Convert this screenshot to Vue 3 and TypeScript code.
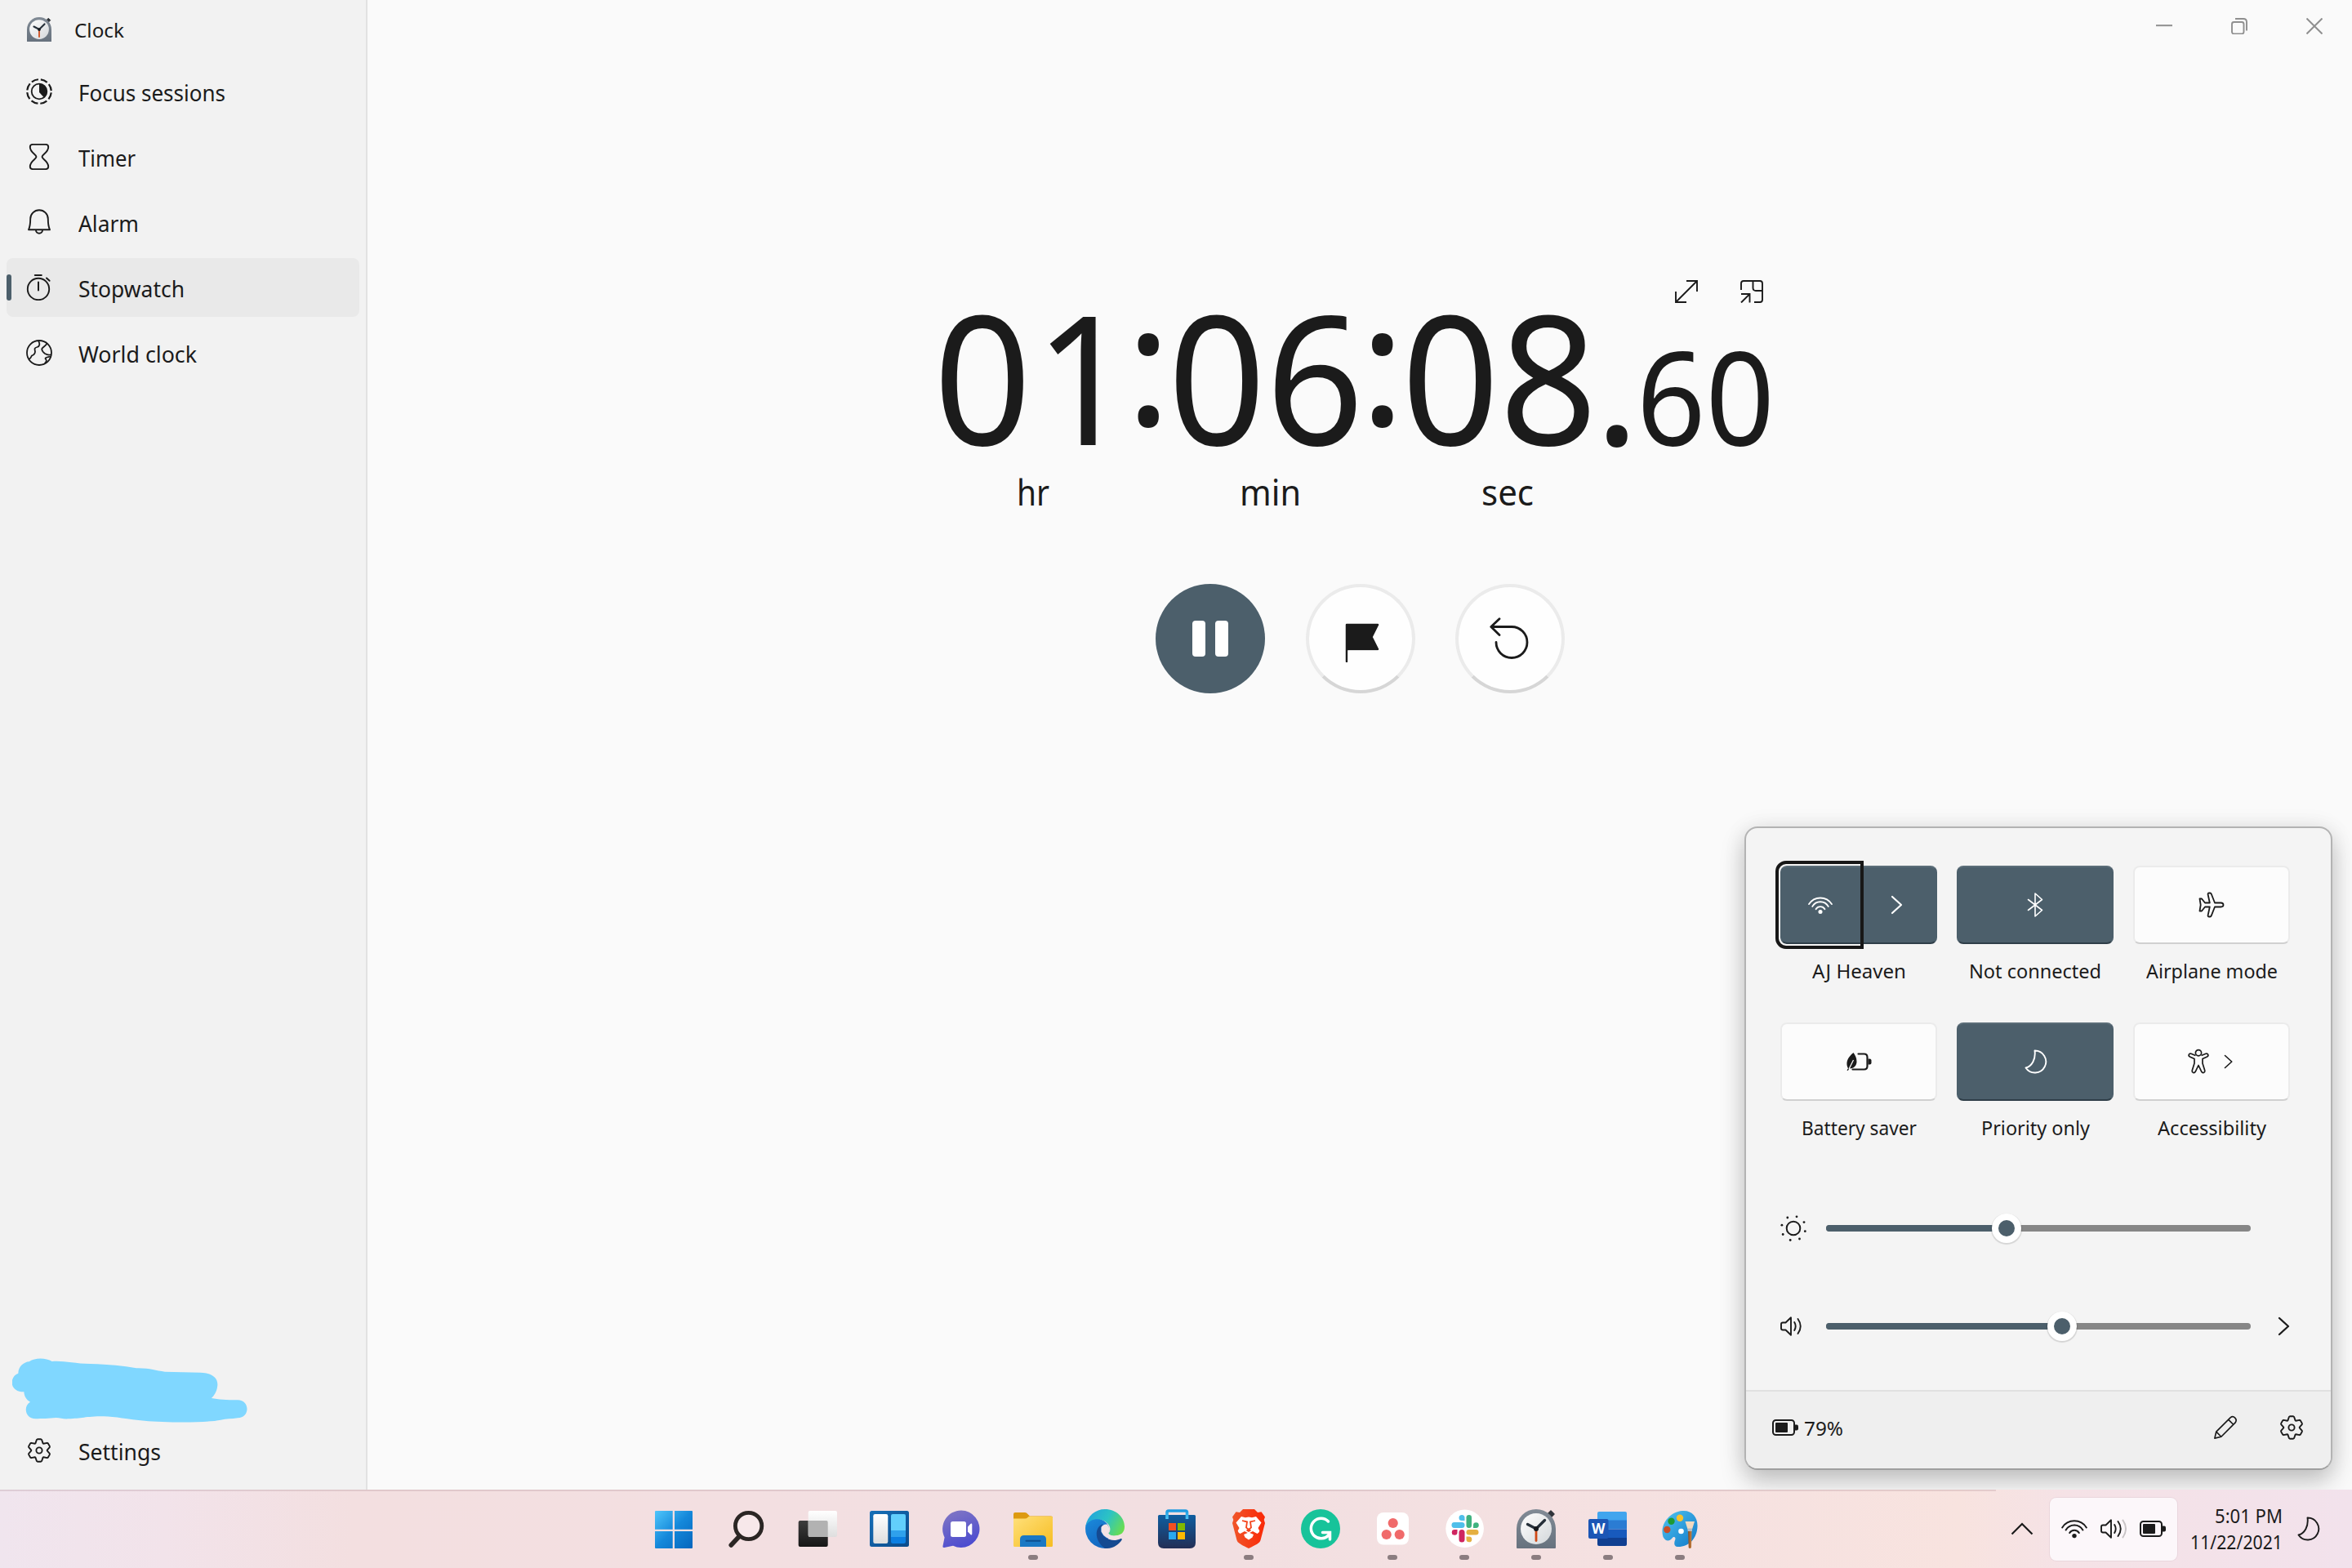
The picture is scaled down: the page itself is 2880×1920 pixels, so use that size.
<script setup lang="ts">
import type { ObjectDirective } from 'vue'

// Condenses a run of text horizontally so that it takes exactly the given width.
const vFit: ObjectDirective<HTMLElement, number> = {
  mounted(el, { value }) {
    const natural = el.getBoundingClientRect().width
    el.style.transform = `scaleX(${value / natural})`
    el.style.marginRight = `${value - natural}px`
  },
}

interface NavItem {
  label: string
  icon: string
  width: number
  active?: boolean
}

const nav: NavItem[] = [
  { label: 'Focus sessions', icon: 'focus', width: 180 },
  { label: 'Timer', icon: 'timer', width: 70 },
  { label: 'Alarm', icon: 'bell', width: 74 },
  { label: 'Stopwatch', icon: 'stopwatch', width: 130, active: true },
  { label: 'World clock', icon: 'globe', width: 145 },
]

interface Tile {
  label: string
  icon: string
  width: number
  on: boolean
  split?: boolean
  more?: boolean
}

const tiles: Tile[] = [
  { label: 'AJ Heaven', icon: 'wifi', width: 115, on: true, split: true },
  { label: 'Not connected', icon: 'bluetooth', width: 162, on: true },
  { label: 'Airplane mode', icon: 'plane', width: 161, on: false },
  { label: 'Battery saver', icon: 'saver', width: 141, on: false },
  { label: 'Priority only', icon: 'moon', width: 133, on: true },
  { label: 'Accessibility', icon: 'person', width: 133, on: false, more: true },
]

const sliders = [
  { name: 'sun', value: 42.5, more: false },
  { name: 'speaker', value: 55.6, more: true },
]

const apps = [
  { icon: 'windows', running: false },
  { icon: 'search', running: false },
  { icon: 'taskview', running: false },
  { icon: 'widgets', running: false },
  { icon: 'chat', running: false },
  { icon: 'folder', running: true },
  { icon: 'edge', running: false },
  { icon: 'store', running: false },
  { icon: 'brave', running: true },
  { icon: 'grammarly', running: false },
  { icon: 'asana', running: true },
  { icon: 'slack', running: true },
  { icon: 'clockapp', running: true },
  { icon: 'word', running: true },
  { icon: 'paint', running: true },
]

// Six-toothed gear around (16, 16).
const gear = (() => {
  const profile = [[-4.6, -8.6], [-3.1, -13], [-2, -13.7], [2, -13.7], [3.1, -13], [4.6, -8.6]]
  const points: string[] = []
  for (let k = 0; k < 6; k++) {
    const a = (k * Math.PI) / 3
    for (const [x, y] of profile) {
      const px = 16 + x * Math.cos(a) - y * Math.sin(a)
      const py = 16 + x * Math.sin(a) + y * Math.cos(a)
      points.push(`${px.toFixed(2)} ${py.toFixed(2)}`)
    }
  }
  return `M${points.join('L')}Z`
})()
</script>

<template>
  <svg class="defs" width="0" height="0" aria-hidden="true">
    <defs>
      <linearGradient id="gWin" x1="0" y1="0" x2="1" y2="1"><stop offset="0" stop-color="#4fc6fb" /><stop offset=".5" stop-color="#1488da" /><stop offset="1" stop-color="#0566bd" /></linearGradient>
      <linearGradient id="gDark" x1="0" y1="0" x2="0" y2="1"><stop offset="0" stop-color="#3d3d3d" /><stop offset="1" stop-color="#161616" /></linearGradient>
      <linearGradient id="gLight" x1="0" y1="0" x2="0" y2="1"><stop offset="0" stop-color="#fff" /><stop offset="1" stop-color="#dedede" /></linearGradient>
      <linearGradient id="gWid" x1="0" y1="0" x2="1" y2="1"><stop offset="0" stop-color="#1670b8" /><stop offset="1" stop-color="#0b4a8a" /></linearGradient>
      <linearGradient id="gChat" x1=".2" y1="0" x2=".6" y2="1"><stop offset="0" stop-color="#8076c4" /><stop offset="1" stop-color="#4b4bd0" /></linearGradient>
      <linearGradient id="gFold" x1="0" y1="0" x2="1" y2="1"><stop offset="0" stop-color="#ffe07a" /><stop offset="1" stop-color="#f6bd22" /></linearGradient>
      <linearGradient id="gEdgeT" x1="0" y1=".3" x2="1" y2=".7"><stop offset="0" stop-color="#22a4dc" /><stop offset=".5" stop-color="#2cc3c4" /><stop offset="1" stop-color="#6ade4e" /></linearGradient>
      <linearGradient id="gEdgeB" x1="0" y1="0" x2=".5" y2="1"><stop offset="0" stop-color="#1b8bdc" /><stop offset="1" stop-color="#1367c0" /></linearGradient>
      <linearGradient id="gStore" x1="0" y1="0" x2="0" y2="1"><stop offset="0" stop-color="#0f5ea0" /><stop offset="1" stop-color="#232e55" /></linearGradient>
      <linearGradient id="gHandle" x1="0" y1="0" x2="0" y2="1"><stop offset="0" stop-color="#1e9ae0" /><stop offset="1" stop-color="#4cc8f8" /></linearGradient>
      <linearGradient id="gBrave" x1="0" y1="0" x2="1" y2="0"><stop offset="0" stop-color="#f0562a" /><stop offset="1" stop-color="#fa2806" /></linearGradient>
      <linearGradient id="gCase" x1="0" y1="0" x2="0" y2="1"><stop offset="0" stop-color="#818b96" /><stop offset="1" stop-color="#67727e" /></linearGradient>
      <linearGradient id="gFace" x1="0" y1="0" x2="1" y2="1"><stop offset="0" stop-color="#fff" /><stop offset="1" stop-color="#d3d7da" /></linearGradient>
      <linearGradient id="gPal" x1="0" y1="0" x2="1" y2="1"><stop offset="0" stop-color="#4fc3f0" /><stop offset="1" stop-color="#1179c9" /></linearGradient>
      <linearGradient id="gBrush" x1="0" y1="0" x2="1" y2="0"><stop offset="0" stop-color="#8a4c1e" /><stop offset="1" stop-color="#c98240" /></linearGradient>
    </defs>

    <symbol id="i-focus" viewBox="0 0 32 32">
      <circle cx="16" cy="16" r="14.8" fill="none" stroke="currentColor" stroke-width="2.2" stroke-dasharray="8.6 3.02" stroke-dashoffset="-1.5" stroke-linecap="butt" />
      <circle cx="16" cy="16" r="9.3" fill="none" stroke="currentColor" stroke-width="1.8" />
      <path d="M16 6.5A9.5 9.5 0 0 1 22 23.4L16 17Z" fill="currentColor" />
    </symbol>
    <symbol id="i-timer" viewBox="0 0 32 32">
      <path d="M8 .9H24Q27.2 .9 27.2 4C27.2 11 19.5 13 19.5 16S27.2 21 27.2 28Q27.2 31.1 24 31.1H8Q4.8 31.1 4.8 28C4.8 21 12.5 19 12.5 16S4.8 11 4.8 4Q4.8 .9 8 .9Z" fill="none" stroke="currentColor" stroke-width="1.9" />
    </symbol>
    <symbol id="i-bell" viewBox="0 0 32 32">
      <path d="M3 25.3C5.2 20.5 5.2 17 5.2 12A10.8 10.8 0 0 1 26.8 12C26.8 17 26.8 20.5 29 25.3ZM12 25.8a4 4 0 0 0 8 0" fill="none" stroke="currentColor" stroke-width="1.9" stroke-linejoin="round" />
    </symbol>
    <symbol id="i-stopwatch" viewBox="0 0 32 32">
      <circle cx="15" cy="18" r="13.2" fill="none" stroke="currentColor" stroke-width="1.9" />
      <path d="M15 9.5v10M10.8 1h8M25 4.5l3.6 3.3" fill="none" stroke="currentColor" stroke-width="2" stroke-linecap="round" />
    </symbol>
    <symbol id="i-globe" viewBox="0 0 32 32">
      <g fill="none" stroke="currentColor" stroke-width="1.8" stroke-linejoin="round"><circle cx="16" cy="16" r="15" /><path d="M15 1.2C17 5 17 8 13.5 9C9.500 10 10.500 11.500 11 14.500C11 17.500 9.500 18.500 7 19.500C5.800 20.500 6.800 22.500 3.300 23.800M25.500 4.300C24 8 19.500 9.500 19.200 11.500C19.500 14 21.500 16 23 17C25.500 18.500 28.500 19 30.700 18M30 20.500C26.500 21.500 23.800 21.500 23.500 23C24.800 25 26 26 22.800 29" /></g>
    </symbol>
    <symbol id="i-gear" viewBox="0 0 32 32">
      <path :d="gear" fill="none" stroke="currentColor" stroke-width="1.9" stroke-linejoin="round" /><circle cx="16" cy="16" r="3.6" fill="none" stroke="currentColor" stroke-width="1.9" />
    </symbol>
    <symbol id="i-wifi" viewBox="0 0 32 24">
      <g fill="none" stroke="currentColor" stroke-width="2" stroke-linecap="round"><path d="M1.200 10.500A17.500 17.500 0 0 1 30.800 10.500" /><path d="M5.600 13.500A12 12 0 0 1 26.400 13.500" /><path d="M10.200 17A6.800 6.800 0 0 1 21.800 17" /></g><circle cx="16" cy="20.600" r="2.700" fill="currentColor" />
    </symbol>
    <symbol id="i-bluetooth" viewBox="0 0 32 32">
      <path d="M7.500 9.500L24.500 22.500L16 30V2L24.500 9.500L7.500 22.500" fill="none" stroke="currentColor" stroke-width="1.600" stroke-linejoin="round" stroke-linecap="round" />
    </symbol>
    <symbol id="i-plane" viewBox="0 0 32 32">
      <path d="M1.500 8.500H4L8 13.500H13.800L11.600 3.200Q11.500 1.500 13 1.500H14.200Q15.300 1.500 15.800 2.800L20 13.500H27.500Q30.500 13.700 30.500 16T27.500 18.500H20L15.800 29.200Q15.300 30.500 14.200 30.500H13Q11.500 30.500 11.600 28.800L13.800 18.500H8L4 23.500H1.500L2.700 16Z" fill="none" stroke="currentColor" stroke-width="1.800" stroke-linejoin="round" />
    </symbol>
    <symbol id="i-saver" viewBox="0 0 32 32">
      <path d="M1.500 26.500L3 24.200C-.5 18 2 11 9.500 5C11.500 8 13.500 11 13.500 16C13.500 20 11 23.500 7 24.200L4.500 24.200L2.800 27Z" fill="currentColor" />
      <path d="M4 25L9.500 14" stroke="#fbfbfb" stroke-width="1.300" />
      <path d="M15.500 6.500H22.500Q26.500 6.500 26.500 10.500V21.500Q26.500 25.500 22.500 25.500H8.500" fill="none" stroke="currentColor" stroke-width="2.200" stroke-linecap="round" /><path d="M27.500 12.500H29.500Q31.500 12.500 31.500 14.500V17.500Q31.500 19.500 29.500 19.500H27.500Z" fill="currentColor" />
    </symbol>
    <symbol id="i-moon" viewBox="0 0 32 32">
      <path d="M15.500 2.500A13.500 13.500 0 1 1 4.500 23.500C12 21.500 17 13 15.500 2.500Z" fill="none" stroke="currentColor" stroke-width="1.900" stroke-linejoin="round" />
    </symbol>
    <symbol id="i-person" viewBox="0 0 32 32">
      <g fill="none" stroke="currentColor" stroke-width="1.700" stroke-linejoin="round"><circle cx="16" cy="5.200" r="3.600" /><path d="M12.500 8.500L7 6.200Q5 5.600 4.300 7.300T5.500 10L11 12.500V18L8.200 27Q8 29 9.600 29.500T12.200 28.300L16 20.500L19.800 28.300Q20.800 30 22.400 29.500T23.800 27L21 18V12.500L26.500 10Q28.400 9 27.700 7.300T25 6.200L19.500 8.500" /></g>
    </symbol>
    <symbol id="i-sun" viewBox="0 0 32 32">
      <circle cx="16" cy="16" r="8.300" fill="none" stroke="currentColor" stroke-width="2" />
      <g fill="currentColor"><circle cx="8.800" cy="3" r="1.400" /><circle cx="20" cy="1.800" r="1.400" /><circle cx="29" cy="8.600" r="1.400" /><circle cx="30.300" cy="19.700" r="1.400" /><circle cx="23.500" cy="29" r="1.400" /><circle cx="12.200" cy="30.500" r="1.400" /><circle cx="3.200" cy="23.500" r="1.400" /><circle cx="1.900" cy="12.200" r="1.400" /></g>
    </symbol>
    <symbol id="i-speaker" viewBox="0 0 32 24">
      <g fill="none" stroke="currentColor" stroke-width="1.900" stroke-linejoin="round" stroke-linecap="round"><path d="M3 7.500H6.500L13 1.300V22.700L6.500 16.500H3Q1 16.500 1 14.500V9.500Q1 7.500 3 7.500ZM17.200 7Q20.200 12 17.200 17M21.500 3Q28 12 21.500 21" /></g>
    </symbol>
    <symbol id="i-battery" viewBox="0 0 32 20">
      <rect x="1" y="1" width="26" height="18" rx="3.500" fill="none" stroke="currentColor" stroke-width="2" /><rect x="4" y="4" width="15" height="12" rx="1" fill="currentColor" /><path d="M28 6.500H30Q32 6.500 32 8.500V11.500Q32 13.500 30 13.500H28Z" fill="currentColor" />
    </symbol>
    <symbol id="i-chevron" viewBox="0 0 16 24">
      <path d="M2 2L13 12L2 22" fill="none" stroke="currentColor" stroke-width="2.200" stroke-linecap="round" stroke-linejoin="round" />
    </symbol>
    <symbol id="i-pencil" viewBox="0 0 32 32">
      <path d="M2 30L4 21.500L22.500 3Q25.700 .5 28.500 3.300T29 9.500L10.500 28ZM20 5.700L26.300 12M4 21.500L10.500 28" fill="none" stroke="currentColor" stroke-width="1.800" stroke-linejoin="round" />
    </symbol>

    <symbol id="i-windows" viewBox="0 0 48 48">
      <path d="M1 3Q1 2 2 2H22.700V24.700H1ZM25 2H46Q47 2 47 3V24.700H25ZM1 27H22.700V48H2Q1 48 1 47ZM25 27H47V47Q47 48 46 48H25Z" fill="url(#gWin)" />
    </symbol>
    <symbol id="i-search" viewBox="0 0 48 48">
      <circle cx="27.600" cy="20.500" r="16.200" fill="#f7e8ea" stroke="#2b2624" stroke-width="4.800" /><path d="M16.500 33L6.200 44" stroke="#2b2624" stroke-width="5.500" stroke-linecap="round" />
    </symbol>
    <symbol id="i-taskview" viewBox="0 0 48 48">
      <rect x=".7" y="14" width="36" height="32" rx="2" fill="url(#gDark)" /><rect x="12.700" y="2" width="35.300" height="32" rx="2" fill="url(#gLight)" /><path d="M12.700 14H35Q36.700 14 36.700 16V34H14.500Q12.700 34 12.700 32Z" fill="#b2b2b2" />
    </symbol>
    <symbol id="i-widgets" viewBox="0 0 48 48">
      <rect x="0" y="2" width="48" height="44" rx="2.500" fill="url(#gWid)" /><rect x="4.300" y="6" width="18" height="36" rx="2.200" fill="url(#gLight)" /><rect x="26" y="6" width="18" height="36" rx="2.200" fill="#0c7fe2" /><path d="M26 26H44V34H26Z" fill="#2fa1ec" /><path d="M28.200 6H41.800Q44 6 44 8.200V26H26V8.200Q26 6 28.200 6Z" fill="#62cffc" />
    </symbol>
    <symbol id="i-chat" viewBox="0 0 48 48">
      <path d="M24 1.500A22.700 22.700 0 1 1 14 44.700L3.300 47Q1 47.300 1.500 45L3.600 34.500A22.700 22.700 0 0 1 24 1.500Z" fill="url(#gChat)" /><rect x="11" y="15" width="19" height="19" rx="2.500" fill="#fff" /><path d="M32 21.500L35.700 17.800Q37.300 17 37.300 19V30Q37.300 32 35.700 31.200L32 27.500Z" fill="#fff" />
    </symbol>
    <symbol id="i-folder" viewBox="0 0 48 48">
      <path d="M0 6Q0 4 2 4H14Q16 4 17.500 6L20 8.500H46Q48 8.500 48 10V16H0Z" fill="#dd9a10" /><path d="M0 11.500H14Q16 11.500 17.500 10L19 8.800H46.500Q48 8.800 48 10.300V44.500Q48 46 46.500 46H1.500Q0 46 0 44.500Z" fill="url(#gFold)" /><path d="M8 46V37Q8 32 13 32H35Q40 32 40 37V46Z" fill="#1a78c4" /><path d="M15.500 38.800H32.500" stroke="#0d4f90" stroke-width="2" stroke-linecap="round" />
    </symbol>
    <symbol id="i-edge" viewBox="0 0 48 48">
      <path d="M.4 20C3 10 18 8 26 17C34 26 24 42 27 47.800A24 24 0 0 1 .4 20Z" fill="url(#gEdgeB)" />
      <path d="M20.500 18.500C11 23 11 39 24 48C34 48.500 41 43.500 44.700 37.500C45.200 36 44 35.500 43 36.200C33 41 21 35.500 19 26.500C18.500 23 19.500 20.500 22 19Z" fill="#154a91" />
      <path d="M.4 20.500C2.500 8 12.500 0 24 0C38 0 48 10 48 21.500C48 28.500 43 32.500 36.500 32.500C31.500 32.500 28 31 28.500 29.500C31.500 26.500 31 21 27 17.200C20 10.200 6 10 .4 20.500Z" fill="url(#gEdgeT)" />
      <path d="M19.500 22Q22 17.800 26.500 18.500Q31.500 24 28.500 29.500Q30.500 33.500 36.500 32.500Q41.500 32 44 30.500Q43.500 34.500 39 37Q24 38 19.500 27.500Z" fill="#f4e3e5" />
    </symbol>
    <symbol id="i-store" viewBox="0 0 48 48">
      <path d="M1 8.500Q1 7 2.500 7H45.500Q47 7 47 8.500V41Q47 48 40 48H8Q1 48 1 41Z" fill="url(#gStore)" /><path d="M12 12V4Q12 2 14 2H34.500Q36.500 2 36.500 4V12" fill="none" stroke="url(#gHandle)" stroke-width="3.600" /><path d="M14 17H23V26H14Z" fill="#f25022" /><path d="M25 17H34V26H25Z" fill="#7fba00" /><path d="M14 28H23V37H14Z" fill="#29a8ee" /><path d="M25 28H34V37H25Z" fill="#ffb900" />
    </symbol>
    <symbol id="i-brave" viewBox="0 0 48 48">
      <path d="M17 0H31L35 4L39.500 3.300L44 9.500L42.700 13L44 17L38.500 38C37.500 41.500 33 43.500 24 48C15 43.500 10.500 41.500 9.500 38L4 17L5.300 13L4 9.500L8.500 3.300L13 4Z" fill="url(#gBrave)" />
      <path d="M15 9L20 10.200L24 9.400L28 10.200L33 9L39.500 16.500L35.500 23L37.300 26.500Q37 28.500 34.500 30L29 27L24 29.500L19 27L13.500 30Q11 28.500 10.700 26.500L12.500 23L8.500 16.500Z" fill="#fff" /><path d="M18 31L24 28.500L30 31L28.500 34.500L24 37.500L19.500 34.500Z" fill="#fff" />
      <path d="M16 14L22 15.500L21 22.500L24 25L27 22.500L26 15.500L32 14M21.500 25.500L24 27L26.500 25.500" fill="none" stroke="#f4431a" stroke-width="1.800" />
    </symbol>
    <symbol id="i-grammarly" viewBox="0 0 48 48">
      <circle cx="24" cy="24" r="24" fill="#17c39a" /><path d="M33.500 15A12.300 12.300 0 1 0 34 31.500M26.500 28.500H35.500V37" fill="none" stroke="#fff" stroke-width="3.500" stroke-linecap="round" />
    </symbol>
    <symbol id="i-asana" viewBox="0 0 48 48">
      <rect x="5" y="4" width="39" height="39.500" rx="8" fill="#fff" /><g fill="#f06a6a"><circle cx="24.700" cy="17" r="6.100" /><circle cx="16.700" cy="31" r="6.100" /><circle cx="32.700" cy="31" r="6.100" /></g>
    </symbol>
    <symbol id="i-slack" viewBox="0 0 48 48">
      <circle cx="24.600" cy="23.800" r="23.300" fill="#fff" />
      <g fill="#4fbfea"><rect x="8.500" y="16" width="16" height="7" rx="3.500" /><path d="M24.500 14H21A3.500 3.500 0 1 1 24.500 10.500Z" /></g><g fill="#3fb27f"><rect x="26.500" y="7" width="6.500" height="16" rx="3.200" /><path d="M35 23V19.500A3.400 3.400 0 1 1 38.500 23Z" /></g><g fill="#e5b041"><rect x="26.500" y="25" width="15" height="6.500" rx="3.200" /><path d="M26.500 33.500H30A3.400 3.400 0 1 1 26.500 37Z" /></g><g fill="#cf2560"><rect x="17.500" y="25" width="7" height="15.500" rx="3.500" /><path d="M15.500 25V28.500A3.400 3.400 0 1 1 12 25Z" /></g>
    </symbol>
    <symbol id="i-clockapp" viewBox="0 0 48 48">
      <path d="M38.500 5.500L42 2L46 6L42.500 9.500Z" fill="#30343a" stroke="#30343a" stroke-width="1.500" stroke-linejoin="round" /><path d="M0 24A24 24 0 0 1 48 24V47Q48 48 47 48H1Q0 48 0 47Z" fill="url(#gCase)" /><circle cx="24" cy="24" r="19" fill="url(#gFace)" /><path d="M24 26V38.500" stroke="#d04a17" stroke-width="2.800" stroke-linecap="round" /><path d="M13.500 18.500L24 24L34.500 13.500" fill="none" stroke="#26303a" stroke-width="3.400" stroke-linecap="round" /><circle cx="24" cy="24" r="3" fill="#14181c" />
    </symbol>
    <symbol id="i-word" viewBox="0 0 48 48">
      <path d="M11 5Q11 3 13 3H45Q47 3 47 5V14H11Z" fill="#41a5ee" /><path d="M11 13.500H47V24.500H11Z" fill="#2b7cd3" /><path d="M11 24.500H47V35H11Z" fill="#185abd" /><path d="M11 35H47V43Q47 45 45 45H13Q11 45 11 43Z" fill="#103f91" /><rect x="0" y="12" width="24.500" height="24" rx="2" fill="#1b56b5" />
    </symbol>
    <symbol id="i-paint" viewBox="0 0 48 48">
      <path d="M27 2C39 1 46 10 45.500 21C45 36 35 46 22 46C17 46 16.500 42 18 38C19.500 34.500 17 32.500 14.500 35.500C11 40 6.500 39.500 3.500 34C-1 20 10 3.500 27 2Z" fill="url(#gPal)" /><circle cx="24" cy="10.700" r="4.200" fill="#f8c22e" /><circle cx="13.500" cy="14.700" r="4.200" fill="#1d9a34" /><circle cx="8.300" cy="25" r="4.200" fill="#c84e27" /><circle cx="25.500" cy="27" r="3.300" fill="#fff" /><path d="M34 25H38.500L38 47Q36.200 49 34.700 47Z" fill="url(#gBrush)" /><path d="M30.500 15H42L39 24.500H33.500Z" fill="#f1d9c0" /><path d="M33.500 23.500H39V27H33.500Z" fill="#b4bcc4" />
    </symbol>
  </svg>

  <div class="desktop">
    <div class="window">
      <aside class="sidebar">
        <header class="brand">
          <svg width="30" height="30"><use href="#i-clockapp" /></svg>
          <span v-fit="61" class="fit">Clock</span>
        </header>
        <nav class="nav">
          <a v-for="item in nav" :key="item.label" class="item" :class="{ active: item.active }">
            <svg width="32" height="32"><use :href="`#i-${item.icon}`" /></svg>
            <span v-fit="item.width" class="fit">{{ item.label }}</span>
          </a>
        </nav>
        <footer class="nav bottom">
          <div class="account">
            <svg class="scribble" width="288" height="79" viewBox="44 70 864 237">
              <path d="M66 126C66 100 88 84 106 83C130 66 170 70 190 82C230 78 270 90 330 91C400 93 450 98 500 107C550 106 570 116 605 120L735 123C780 124 800 145 798 170C796 195 785 208 776 217C800 222 830 224 872 224C918 224 918 290 872 290C850 294 830 292 810 297C740 310 600 306 530 300C470 296 420 284 380 284C310 284 300 292 250 293C230 294 220 289 205 289C180 292 150 292 130 293C90 293 84 245 110 231C96 224 88 210 87 194C30 194 34 136 66 126Z" fill="#80d7ff" />
            </svg>
          </div>
          <a class="item">
            <svg width="32" height="32"><use href="#i-gear" /></svg>
            <span v-fit="101" class="fit">Settings</span>
          </a>
        </footer>
      </aside>

      <main class="main">
        <div class="caption">
          <button><svg width="20" height="20"><path d="M0 9.200H20" stroke="currentColor" stroke-width="2" /></svg></button>
          <button><svg width="20" height="20" fill="none" stroke="currentColor" stroke-width="1.900"><rect x="1" y="5" width="14.500" height="14.500" rx="2.500" /><path d="M5 1H15Q19 1 19 5V15.500" /></svg></button>
          <button><svg width="20" height="20"><path d="M.5 .5L19.500 19.500M19.500 .5L.5 19.500" stroke="currentColor" stroke-width="2" /></svg></button>
        </div>

        <section class="stopwatch">
          <div class="tools">
            <svg width="28" height="28" fill="none" stroke="currentColor" stroke-width="1.900"><path d="M1.500 26.500L26.500 1.500M14 1H27V14M1 14V27H14" /></svg>
            <svg width="28" height="28" fill="none" stroke="currentColor" stroke-width="1.900"><path d="M1 12V4Q1 1 4 1H24Q27 1 27 4V24Q27 27 24 27H17M15.500 1V9.500Q15.500 13 19 13H27M1 17H11.500V27.500M11 17.500L1 27.500" /></svg>
          </div>
          <div class="time">
            <span v-fit="244" class="fit hours"><span class="lead">0</span>1</span><span class="colon">:</span><span v-fit="240" class="fit">06</span><span class="colon">:</span><span v-fit="240" class="fit">08</span><span class="dot">.</span><span v-fit="169" class="fit small">60</span>
          </div>
          <div class="units">
            <div><span v-fit="40" class="fit">hr</span></div>
            <div><span v-fit="75" class="fit">min</span></div>
            <div><span v-fit="64" class="fit">sec</span></div>
          </div>
          <div class="controls">
            <button class="round primary"><svg width="44" height="44" fill="#fff"><rect width="16" height="44" rx="4" /><rect x="28" width="16" height="44" rx="4" /></svg></button>
            <button class="round"><svg width="42" height="48"><path d="M2 47V2H40L32.500 17L40 32H2" fill="currentColor" stroke="currentColor" stroke-width="2.500" stroke-linejoin="round" stroke-linecap="round" /><path d="M3.500 33.500H42V48H3.500Z" fill="#fefefe" /></svg></button>
            <button class="round"><svg class="reset" width="48" height="51" fill="none" stroke="currentColor" stroke-width="2.800" stroke-linecap="round" stroke-linejoin="round"><path d="M2 11.500H27A19 19 0 1 1 8 30.500M12 1.700L1.800 11.500L12 21.500" /></svg></button>
          </div>
        </section>
      </main>
    </div>

    <section class="panel">
      <div class="body">
        <div class="tiles">
          <div v-for="tile in tiles" :key="tile.label" class="cell">
            <div class="tile" :class="{ on: tile.on, split: tile.split }">
              <template v-if="tile.split">
                <span class="half focused"><svg width="30" height="23"><use href="#i-wifi" /></svg></span>
                <span class="half"><svg width="16" height="24"><use href="#i-chevron" /></svg></span>
              </template>
              <template v-else>
                <svg width="32" height="32" :class="tile.icon"><use :href="`#i-${tile.icon}`" /></svg>
                <svg v-if="tile.more" class="more" width="12" height="18"><use href="#i-chevron" /></svg>
              </template>
            </div>
            <span v-fit="tile.width" class="fit">{{ tile.label }}</span>
          </div>
        </div>
        <div v-for="s in sliders" :key="s.name" class="slider">
          <svg width="32" height="32"><use :href="`#i-${s.name}`" /></svg>
          <div class="track">
            <div class="value" :style="{ width: s.value + '%' }"><i class="thumb"></i></div>
          </div>
          <svg v-if="s.more" width="16" height="24"><use href="#i-chevron" /></svg>
        </div>
      </div>
      <footer class="foot">
        <svg width="32" height="20"><use href="#i-battery" /></svg>
        <span v-fit="48" class="fit pct">79%</span>
        <svg width="30" height="30"><use href="#i-pencil" /></svg>
        <svg width="32" height="32"><use href="#i-gear" /></svg>
      </footer>
    </section>

    <footer class="taskbar">
      <div class="apps">
        <div v-for="app in apps" :key="app.icon" class="app">
          <svg width="48" height="48">
            <use :href="`#i-${app.icon}`" />
            <text v-if="app.icon === 'word'" x="12.200" y="30" text-anchor="middle" class="letter">W</text>
          </svg>
          <i v-if="app.running"></i>
        </div>
      </div>
      <div class="tray">
        <svg width="28" height="16"><path d="M1.500 14.500L14 2L26.500 14.500" fill="none" stroke="currentColor" stroke-width="2.200" /></svg>
        <div class="status">
          <svg width="32" height="24"><use href="#i-wifi" /></svg>
          <svg width="32" height="24"><use href="#i-speaker" /><path d="M27 .8Q35 12 27 23.200" fill="none" stroke="#c9c4c6" stroke-width="2" /></svg>
          <svg width="32" height="20"><use href="#i-battery" /></svg>
        </div>
        <div class="clock">
          <span v-fit="83" class="fit">5:01 PM</span>
          <span v-fit="113" class="fit">11/22/2021</span>
        </div>
        <svg width="32" height="32"><use href="#i-moon" /></svg>
      </div>
    </footer>
  </div>
</template>

<style>
body {
  margin: 0;
  overflow: hidden;
}
</style>

<style scoped>
.defs {
  position: absolute;
}
.desktop {
  position: relative;
  display: flex;
  flex-direction: column;
  width: 2880px;
  height: 1920px;
  overflow: hidden;
  font-family: 'Noto Sans', 'Open Sans', sans-serif;
  color: #1b1b1b;
  background: #fafafa;
}
svg {
  display: block;
  flex: none;
}
button {
  padding: 0;
  border: 0;
  background: none;
  color: inherit;
  font: inherit;
}
.fit {
  display: inline-block;
  flex: none;
  white-space: nowrap;
  transform-origin: left center;
}
.window {
  display: flex;
  height: 1824px;
}

/* sidebar */
.sidebar {
  box-sizing: border-box;
  display: flex;
  flex-direction: column;
  width: 450px;
  padding: 20px 8px 12px;
  background: #f2f2f2;
  border-right: 2px solid #e2e2e2;
}
.brand {
  display: flex;
  align-items: center;
  gap: 28px;
  height: 32px;
  padding-left: 25px;
  font-size: 23.500px;
  line-height: 32px;
}
.brand .fit {
  margin-top: 2px;
}
.nav {
  display: flex;
  flex-direction: column;
  gap: 8px;
  margin-top: 24px;
}
.bottom {
  margin-top: auto;
}
.item {
  position: relative;
  display: flex;
  align-items: center;
  gap: 32px;
  width: 408px;
  height: 72px;
  padding-left: 24px;
  border-radius: 8px;
  font-size: 27.500px;
}
.item .fit {
  margin-top: 2px;
}
.active {
  background: #e9e9e9;
}
.active::before {
  content: '';
  position: absolute;
  left: 0;
  top: 20px;
  width: 6px;
  height: 32px;
  border-radius: 3px;
  background: #4c5f6b;
}
.account {
  position: relative;
  height: 72px;
}
.scribble {
  position: absolute;
  left: 7px;
  top: 3px;
}

/* main area */
.main {
  flex: 1;
  background: #fafafa;
}
.caption {
  display: flex;
  justify-content: flex-end;
  height: 64px;
  color: #8f8f8f;
}
.caption button {
  display: flex;
  align-items: center;
  justify-content: center;
  width: 92px;
}
.stopwatch {
  padding: 279px 0 0 670px;
}
.tools {
  display: flex;
  gap: 52px;
  padding-left: 931px;
}
.time {
  display: flex;
  align-items: baseline;
  height: 170px;
  margin-top: 4px;
  padding-left: 23px;
  font-size: 219px;
  line-height: 170px;
}
.lead {
  letter-spacing: 4px;
}
.colon,
.dot {
  display: flex;
  justify-content: center;
  width: 46.500px;
  font-size: 205px;
}
.colon {
  align-self: flex-start;
  line-height: 134px;
}
.hours + .colon {
  margin-left: -4px;
}
.dot {
  width: 48px;
}
.small {
  font-size: 158.500px;
}
.units {
  display: grid;
  grid-template-columns: repeat(3, 290.500px);
  margin-top: 28px;
  font-size: 43px;
  line-height: 60px;
}
.units div {
  display: flex;
  justify-content: center;
}
.controls {
  display: flex;
  gap: 49.500px;
  margin-top: 82px;
  padding-left: 295px;
}
.round {
  box-sizing: border-box;
  display: flex;
  align-items: center;
  justify-content: center;
  width: 134px;
  height: 134px;
  padding-top: 9px;
  padding-left: 4px;
  border: 4px solid #ebebeb;
  border-bottom-color: #d6d6d6;
  border-radius: 50%;
  background: #fefefe;
}
.round .reset {
  margin: -11px 0 0 -6px;
}
.primary {
  padding: 0;
  border: 0;
  background: #4c5f6b;
}

/* quick settings */
.panel {
  position: absolute;
  left: 2136px;
  top: 1012px;
  z-index: 2;
  box-sizing: border-box;
  display: flex;
  flex-direction: column;
  width: 720px;
  height: 788px;
  border: 2px solid #b3b3b3;
  border-bottom-color: #9f9f9f;
  border-radius: 16px;
  background: #f4f4f4;
  box-shadow: 0 14px 30px rgba(0, 0, 0, 0.22), 0 0 28px rgba(0, 0, 0, 0.07);
  clip-path: inset(-60px -60px -24px -60px);
}
.body {
  flex: 1;
  padding: 46px 42px 0;
}
.tiles {
  display: grid;
  grid-template-columns: repeat(3, 192px);
  gap: 24px;
  row-gap: 0;
}
.cell {
  display: flex;
  flex-direction: column;
  align-items: center;
  gap: 16px;
  height: 192px;
  font-size: 23.500px;
  line-height: 34px;
}
.tile {
  box-sizing: border-box;
  display: flex;
  align-items: center;
  justify-content: center;
  width: 192px;
  height: 96px;
  border: 2px solid #ebebeb;
  border-bottom-color: #d0d0d0;
  border-radius: 8px;
  background: #fcfcfc;
}
.on {
  border-color: #5b6d78;
  border-right-color: #4c5f6b;
  border-left-color: #4c5f6b;
  border-bottom-color: #2f3e48;
  background: #4c5f6b;
  color: #fff;
}
.half {
  position: relative;
  display: flex;
  flex: 1;
  align-items: center;
  justify-content: center;
  height: 92px;
}
.focused::after {
  content: '';
  position: absolute;
  left: -8px;
  top: -8px;
  box-sizing: border-box;
  width: 108px;
  height: 108px;
  border: 4px solid #171717;
  border-radius: 13px 0 0 13px;
  box-shadow: inset 2px 0 0 #f4f4f4, inset 0 2px 0 #f4f4f4, inset 0 -2px 0 #f4f4f4;
}
.person {
  margin-left: -5px;
}
.more {
  margin-left: 15px;
}
.slider {
  display: flex;
  align-items: center;
  gap: 24px;
  height: 120px;
}
.track {
  width: 520px;
  height: 8px;
  border-radius: 4px;
  background: #868686;
}
.slider svg:last-child:not(:first-child) {
  margin-left: 9px;
}
.value {
  position: relative;
  height: 8px;
  border-radius: 4px;
  background: #4c5f6b;
}
.thumb {
  position: absolute;
  right: -18px;
  top: -14px;
  box-sizing: border-box;
  width: 36px;
  height: 36px;
  border: 8px solid #fff;
  border-radius: 50%;
  background: #4c5f6b;
  box-shadow: 0 1px 1px 1px rgba(0, 0, 0, 0.13);
}
.foot {
  box-sizing: border-box;
  display: flex;
  align-items: center;
  height: 96px;
  padding: 0 32px 6px 32px;
  border-top: 2px solid #e1e1e1;
  border-radius: 0 0 14px 14px;
  background: #efefef;
  font-size: 23.500px;
}
.foot .pct {
  margin-left: 7px;
  padding-top: 2px;
}
.foot svg:nth-of-type(2) {
  margin-left: auto;
  margin-right: 50px;
}

/* taskbar */
.taskbar {
  position: relative;
  display: flex;
  justify-content: space-between;
  height: 96px;
  background: linear-gradient(90deg, #f0e5ee 0, #f2e3ea 200px, #f3dfe0 430px, #f3dfe1 900px, #f2dfe1 1500px, #f5e1e1 2000px, #f8e3df 2400px, #f5e2e6 2530px, #f2e2ec 2880px);
}
.taskbar::before {
  content: '';
  position: absolute;
  left: 0;
  top: 0;
  width: 2444px;
  height: 2px;
  background: rgba(150, 110, 120, 0.2);
}
.apps {
  display: flex;
  padding-left: 781px;
}
.app {
  display: flex;
  flex-direction: column;
  align-items: center;
  width: 88px;
  padding-top: 24px;
}
.app i {
  width: 12px;
  height: 6px;
  margin-top: 8px;
  border-radius: 3px;
  background: #8b7d80;
}
.letter {
  font: 700 17px 'Open Sans', sans-serif;
  fill: #fff;
}
.tray {
  display: flex;
  align-items: center;
  padding-right: 38px;
}
.status {
  box-sizing: border-box;
  display: flex;
  align-items: center;
  gap: 16px;
  width: 156px;
  height: 77px;
  margin: 0 16px 0 20px;
  padding-left: 14px;
  border-radius: 8px;
  background: #fcf7fa;
  box-shadow: 0 0 0 1px rgba(120, 80, 100, 0.08);
}
.clock {
  display: flex;
  flex-direction: column;
  align-items: flex-end;
  margin-right: 15px;
  font-size: 23.500px;
  line-height: 32px;
}
</style>
